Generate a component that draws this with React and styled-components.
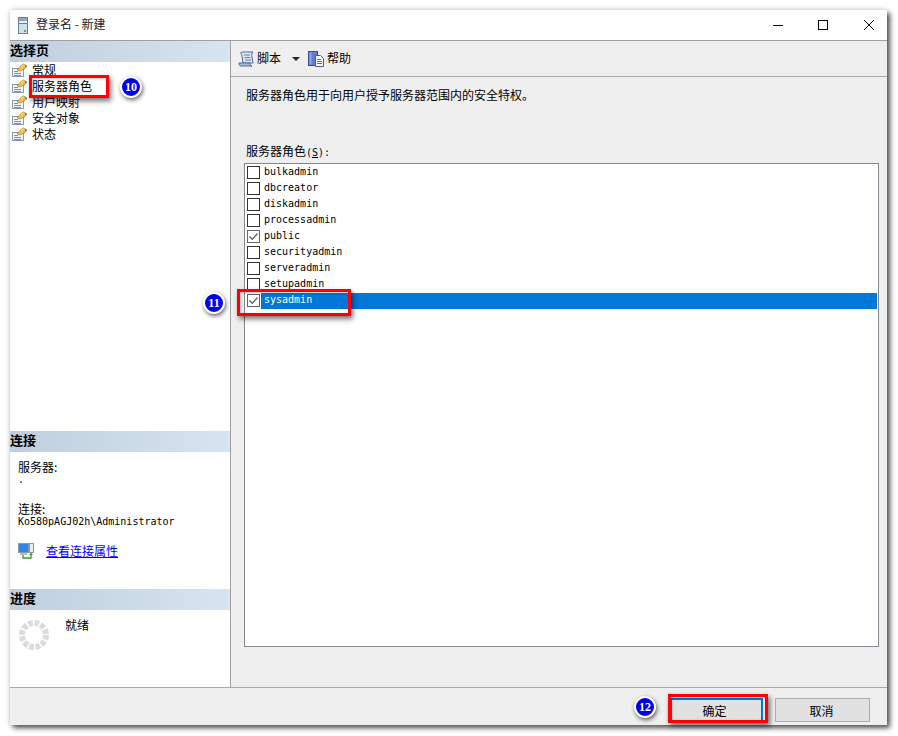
import React from "react";
import styled, { createGlobalStyle } from "styled-components";

const cjk = `"Noto Sans CJK SC", "Liberation Sans", sans-serif`;
const mono = `"DejaVu Sans Mono", "Noto Sans CJK SC", monospace`;

const Global = createGlobalStyle`
  html, body { margin: 0; padding: 0; background: #fff; }
  body { font-family: ${cjk}; font-size: 12px; color: #000; }
`;

const Page = styled.div`
  position: relative;
  width: 898px;
  height: 736px;
  padding: 10px 11px 11px 10px;
  box-sizing: border-box;
  overflow: hidden;
`;
const Window = styled.div`
  width: 877px;
  height: 715px;
  display: flex;
  flex-direction: column;
  background: #efefef;
  box-shadow: 3px 3px 5px rgba(0, 0, 0, 0.65), 0 0 6px rgba(0, 0, 0, 0.18);
`;
const TitleBar = styled.header`
  height: 30px;
  flex: none;
  display: flex;
  align-items: center;
  background: #fff;
  border-bottom: 1px solid #a0a0a0;
  padding: 0 13px 0 8px;
`;
const TitleText = styled.span`
  margin: -2px 0 0 8px;
  flex: 1;
  line-height: 16px;
  color: #222;
`;
const Controls = styled.div`
  display: flex;
  gap: 35px;
  align-items: center;
  margin-top: -1px;
  svg:last-child {
    margin-left: 1px;
  }
`;
const Body = styled.div`
  flex: 1;
  min-height: 0;
  display: flex;
`;
const Sidebar = styled.aside`
  width: 221px;
  box-sizing: border-box;
  flex: none;
  display: flex;
  flex-direction: column;
  background: #fff;
  border-right: 1px solid #a0a0a0;
`;
const Section = styled.section`
  flex: ${(p) => (p.$height ? `0 0 ${p.$height}px` : "1")};
`;
const SectionHead = styled.h2`
  margin: 0;
  height: 21px;
  line-height: 18px;
  font-size: 13px;
  font-weight: 700;
  background: linear-gradient(90deg, #bfcfdd 0%, #d7e4f1 100%);
`;
const NavRow = styled.div`
  height: 16px;
  display: flex;
  align-items: center;
  gap: 5px;
  padding-left: 1px;
  line-height: 16px;
  color: #000;
`;
const ConnBody = styled.div`
  padding: 8px 0 0 8px;
  line-height: 14px;
`;
const MonoLine = styled.div`
  font-family: ${mono};
  font-size: 10px;
  line-height: 12px;
  height: ${(p) => (p.$h ? p.$h : 12)}px;
`;
const ConnLabel = styled.div`
  line-height: 14px;
`;
const LinkRow = styled.div`
  display: flex;
  align-items: center;
  gap: 12px;
  margin-top: 15px;
`;
const Link = styled.a`
  color: #0000ff;
  text-decoration: underline;
`;
const ProgressBody = styled.div`
  display: flex;
  align-items: flex-start;
  padding: 10px 0 0 9px;
  gap: 16px;
`;
const ReadyText = styled.span`
  line-height: 14px;
  margin-top: -2px;
  color: #000;
`;
const Main = styled.main`
  flex: 1;
  min-width: 0;
  display: flex;
  flex-direction: column;
`;
const Toolbar = styled.div`
  height: 36px;
  box-sizing: border-box;
  flex: none;
  display: flex;
  align-items: center;
  padding: 0 0 0 7px;
  border-bottom: 1px solid #a9a9a9;
`;
const ToolLabel = styled.span`
  margin: -1px 0 0 3px;
  line-height: 16px;
`;
const Arrow = styled.span`
  width: 0;
  height: 0;
  margin: 0 8px 0 11px;
  border-left: 4px solid transparent;
  border-right: 4px solid transparent;
  border-top: 4px solid #222;
`;
const Content = styled.div`
  flex: 1;
  min-height: 0;
  display: flex;
  flex-direction: column;
  padding: 10px 8px 40px 15px;
`;
const Intro = styled.p`
  margin: 0;
  line-height: 16px;
`;
const ListLabel = styled.label`
  margin: 40px 0 2px;
  line-height: 16px;
`;
const Hot = styled.span`
  font-family: ${mono};
  font-size: 10px;
`;
const HotKey = styled.u`
  text-underline-offset: 1px;
`;
const ListBox = styled.div`
  flex: 1;
  margin-left: -2px;
  background: #fff;
  border: 1px solid #828790;
  padding-right: 1px;
`;
const RoleRow = styled.div`
  height: 16px;
  display: flex;
  align-items: center;
  padding-left: 2px;
`;
const Check = styled.span`
  width: 13px;
  height: 13px;
  box-sizing: border-box;
  flex: none;
  display: flex;
  border: 1px solid ${(p) => (p.$on ? "#666" : "#333")};
  background: #fff;
`;
const RoleName = styled.span`
  flex: 1;
  align-self: flex-start;
  height: 16px;
  margin: 1px 0 0 1px;
  padding-left: 3px;
  font-family: ${mono};
  font-size: 10px;
  line-height: 13px;
  color: ${(p) => (p.$sel ? "#fff" : "#000")};
  background: ${(p) => (p.$sel ? "#0078d7" : "transparent")};
`;
const Footer = styled.footer`
  height: 38px;
  box-sizing: border-box;
  flex: none;
  display: flex;
  justify-content: flex-end;
  align-items: flex-start;
  gap: 12px;
  padding: 10px 17px 0 0;
  border-top: 1px solid #a9a9a9;
`;
const Button = styled.button`
  width: ${(p) => (p.$primary ? 93 : 95)}px;
  height: 24px;
  box-sizing: border-box;
  padding: 0 ${(p) => (p.$primary ? 4 : 2)}px 0 0;
  font-family: ${cjk};
  font-size: 12px;
  color: #000;
  background: #e1e1e1;
  border: ${(p) => (p.$primary ? "2px solid #0078d7" : "1px solid #adadad")};
`;
const RedBox = styled.div`
  position: absolute;
  left: ${(p) => p.$x}px;
  top: ${(p) => p.$y}px;
  width: ${(p) => p.$w}px;
  height: ${(p) => p.$h}px;
  box-sizing: border-box;
  border: 3px solid #ff0000;
  box-shadow: 2px 3px 5px rgba(0, 0, 0, 0.55), inset 1px 1px 3px rgba(0, 0, 0, 0.25);
`;
const Badge = styled.div`
  position: absolute;
  left: ${(p) => p.$x}px;
  top: ${(p) => p.$y}px;
  width: 18px;
  height: 18px;
  display: flex;
  align-items: center;
  justify-content: center;
  border-radius: 50%;
  background: #0000f0;
  border: 2px solid #fff;
  box-shadow: 1px 2px 4px rgba(0, 0, 0, 0.6);
  color: #fff;
  font-family: "Liberation Serif", serif;
  font-weight: 700;
  font-size: 12px;
  line-height: 1;
`;

const DocIcon = () => (
  <svg width="16" height="16" viewBox="0 0 16 16" style={{ flex: "none" }}>
    <rect x="1.500" y="6.500" width="11" height="8" fill="#f4f7fd" stroke="#8b98ae" />
    <path d="M3 9.500h4M3 11.500h7M3 13.500h7" stroke="#6f8fc8" />
    <path d="M6 8 10 3.500 12.500 2 15.500 4 14 6.500 9 9z" fill="#eec24a" stroke="#a07c20" strokeWidth="0.7" />
    <path d="M10 5l3-2" stroke="#fbe9a0" />
    <path d="M14 2.500l2 1.500-1 2z" fill="#5c7a3a" />
  </svg>
);
const TitleIcon = () => (
  <svg width="10" height="17" viewBox="0 0 10 17">
    <rect x="0.500" y="0.500" width="9" height="16" fill="#eaf0f7" stroke="#6b7f98" />
    <rect x="1" y="1" width="8" height="3" fill="#8ea3bd" />
    <path d="M1 6.500h8" stroke="#6b7f98" />
    <rect x="1" y="7" width="8" height="9" fill="#d4e0ee" />
    <rect x="6" y="13" width="2" height="2" fill="#4fb04a" />
  </svg>
);
const MinIcon = () => (
  <svg width="10" height="10" viewBox="0 0 10 10">
    <path d="M0 5.500h10" stroke="#000" />
  </svg>
);
const MaxIcon = () => (
  <svg width="10" height="10" viewBox="0 0 10 10">
    <rect x="0.500" y="0.500" width="9" height="9" fill="none" stroke="#000" />
  </svg>
);
const CloseIcon = () => (
  <svg width="10" height="10" viewBox="0 0 10 10">
    <path d="M0 0l10 10M10 0L0 10" stroke="#000" />
  </svg>
);
const ScriptIcon = () => (
  <svg width="16" height="16" viewBox="0 0 16 16">
    <path d="M4 1h11c-1.500 1-1.500 3-1 5l1 6H5L4 5C3.800 3 3 2 2.500 2z" fill="#e3e9f4" stroke="#4f6a96" />
    <path d="M1 12h11c0 2 1 3 2 3H3c-1.500 0-2-1-2-3z" fill="#a9bbd8" stroke="#4f6a96" />
    <path d="M6 4h6M6.500 6.500h6M7 9h6" stroke="#5a78a8" />
  </svg>
);
const HelpIcon = () => (
  <svg width="16" height="16" viewBox="0 0 16 16">
    <rect x="0.500" y="0.500" width="9" height="14" fill="#5f7fd0" stroke="#3c4f96" />
    <rect x="1.500" y="1.500" width="2" height="12" fill="#93a8e6" />
    <path d="M7.500 4.500h5l3 3v8h-8z" fill="#f7f9fc" stroke="#4a5f7e" />
    <path d="M9 8.500h4M9 10.500h5M9 12.500h5" stroke="#5f7090" />
  </svg>
);
const ConnIcon = () => (
  <svg width="16" height="16" viewBox="0 0 16 16" style={{ flex: "none" }}>
    <rect x="0.500" y="0.500" width="10" height="9" fill="#2f86ea" stroke="#8a98ac" />
    <rect x="2" y="10" width="7" height="2" fill="#b0bac8" />
    <rect x="11.500" y="0.500" width="4" height="9" fill="#e8ebf0" stroke="#8a94a4" />
    <path d="M5 12v3h8v-4" fill="none" stroke="#2e9a1e" strokeWidth="1.300" />
    <path d="M11 12l2-2.500 2 2.500z" fill="#2e9a1e" />
  </svg>
);
const Spinner = () => (
  <svg width="30" height="30" viewBox="0 0 30 30">
    <circle cx="15" cy="15" r="12" fill="none" stroke="#dcdcdc" strokeWidth="6" strokeDasharray="4.700 1.583" />
  </svg>
);
const Tick = () => (
  <svg width="11" height="11" viewBox="0 0 11 11">
    <path d="M1.500 5.500 4.300 8.300 9.500 2.500" fill="none" stroke="#666" strokeWidth="1.300" />
  </svg>
);

const navItems = ["常规", "服务器角色", "用户映射", "安全对象", "状态"];
const roles = [
  ["bulkadmin"],
  ["dbcreator"],
  ["diskadmin"],
  ["processadmin"],
  ["public", true],
  ["securityadmin"],
  ["serveradmin"],
  ["setupadmin"],
  ["sysadmin", true, true],
];

export default function App() {
  return (
    <Page>
      <Global />
      <Window>
        <TitleBar>
          <TitleIcon />
          <TitleText>登录名 - 新建</TitleText>
          <Controls>
            <MinIcon />
            <MaxIcon />
            <CloseIcon />
          </Controls>
        </TitleBar>
        <Body>
          <Sidebar>
            <Section>
              <SectionHead>选择页</SectionHead>
              <nav>
                {navItems.map((n) => (
                  <NavRow key={n}>
                    <DocIcon />
                    <span>{n}</span>
                  </NavRow>
                ))}
              </nav>
            </Section>
            <Section $height={158}>
              <SectionHead>连接</SectionHead>
              <ConnBody>
                <ConnLabel>服务器:</ConnLabel>
                <MonoLine $h={28}>.</MonoLine>
                <ConnLabel>连接:</ConnLabel>
                <MonoLine>Ko580pAGJ02h\Administrator</MonoLine>
                <LinkRow>
                  <ConnIcon />
                  <Link href="#">查看连接属性</Link>
                </LinkRow>
              </ConnBody>
            </Section>
            <Section $height={98}>
              <SectionHead>进度</SectionHead>
              <ProgressBody>
                <Spinner />
                <ReadyText>就绪</ReadyText>
              </ProgressBody>
            </Section>
          </Sidebar>
          <Main>
            <Toolbar>
              <ScriptIcon />
              <ToolLabel>脚本</ToolLabel>
              <Arrow />
              <HelpIcon />
              <ToolLabel>帮助</ToolLabel>
            </Toolbar>
            <Content>
              <Intro>服务器角色用于向用户授予服务器范围内的安全特权。</Intro>
              <ListLabel>
                服务器角色<Hot>(<HotKey>S</HotKey>):</Hot>
              </ListLabel>
              <ListBox>
                {roles.map(([name, on, sel]) => (
                  <RoleRow key={name}>
                    <Check $on={on}>{on && <Tick />}</Check>
                    <RoleName $sel={sel}>{name}</RoleName>
                  </RoleRow>
                ))}
              </ListBox>
            </Content>
          </Main>
        </Body>
        <Footer>
          <Button $primary>确定</Button>
          <Button>取消</Button>
        </Footer>
      </Window>
      <RedBox $x={29} $y={75} $w={80} $h={23} />
      <RedBox $x={237} $y={289} $w={114} $h={27} />
      <RedBox $x={668} $y={694} $w={100} $h={29} />
      <Badge $x={120} $y={76}>10</Badge>
      <Badge $x={203} $y={292}>11</Badge>
      <Badge $x={634} $y={696}>12</Badge>
    </Page>
  );
}
